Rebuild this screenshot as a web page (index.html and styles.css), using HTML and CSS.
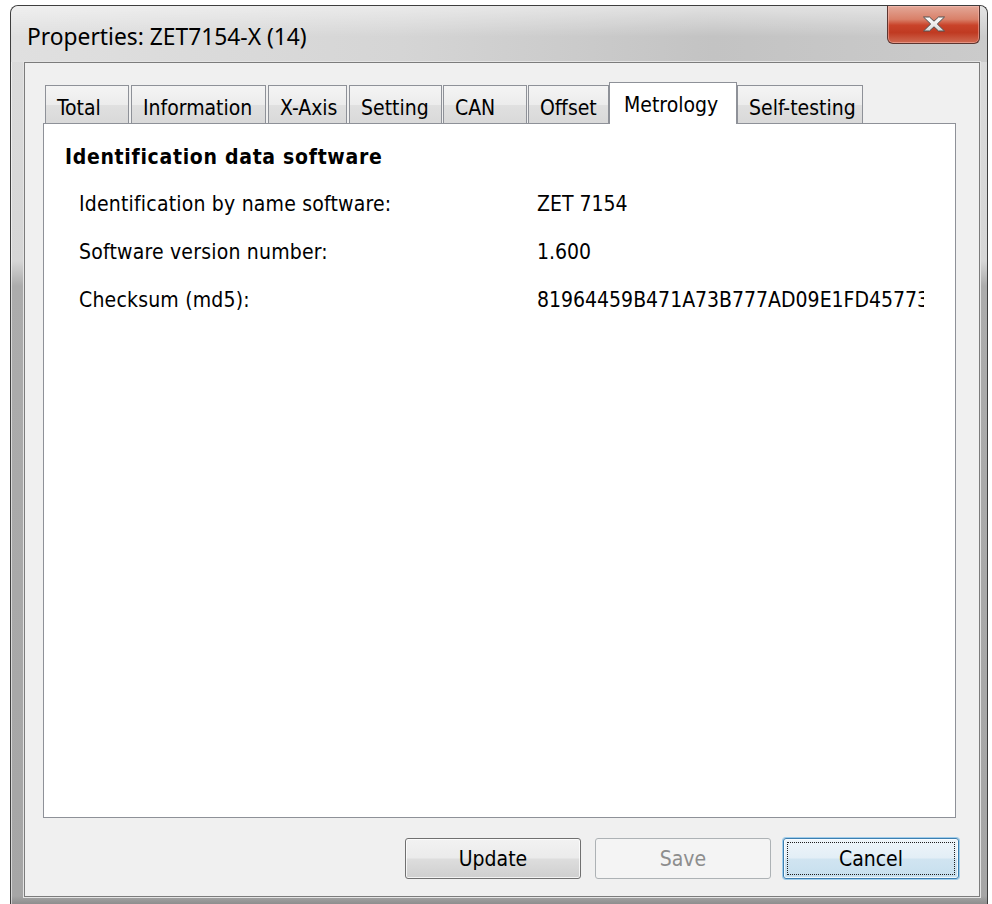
FILE: index.html
```html
<!DOCTYPE html>
<html lang="en">
<head>
<meta charset="utf-8">
<title>Properties: ZET7154-X (14)</title>
<link rel="stylesheet" href="styles.css">
</head>
<body>
<div class="window">
  <div class="titlebar">
    <span class="title">Properties: ZET7154-X (14)</span>
    <button class="close" type="button" aria-label="Close">
      <svg width="24" height="16" viewBox="0 0 24 16" aria-hidden="true">
        <defs>
          <linearGradient id="xfill" x1="0" y1="0" x2="0" y2="1">
            <stop offset="0" stop-color="#ffffff"/>
            <stop offset="1" stop-color="#d9d9d9"/>
          </linearGradient>
        </defs>
        <polygon points="1.5,1 7.5,1 12,5.2 16.5,1 22.5,1 15.3,8 22.5,15 16.5,15 12,10.8 7.5,15 1.5,15 8.7,8"
                 fill="url(#xfill)" stroke="#505050" stroke-width="1" stroke-linejoin="round"/>
      </svg>
    </button>
  </div>

  <div class="client">
    <div class="tabctl">
      <div class="tabs">
        <div class="tab tab-total">Total</div>
        <div class="tab tab-info">Information</div>
        <div class="tab tab-axis">X-Axis</div>
        <div class="tab tab-setting">Setting</div>
        <div class="tab tab-can">CAN</div>
        <div class="tab tab-offset">Offset</div>
        <div class="tab tab-metrology selected">Metrology</div>
        <div class="tab tab-self">Self-testing</div>
      </div>
      <div class="page">
        <div class="group">Identification data software</div>
        <div class="row">
          <span class="label">Identification by name software:</span>
          <span class="value">ZET 7154</span>
        </div>
        <div class="row">
          <span class="label">Software version number:</span>
          <span class="value">1.600</span>
        </div>
        <div class="row">
          <span class="label">Checksum (md5):</span>
          <span class="value">81964459B471A73B777AD09E1FD45773F0</span>
        </div>
      </div>
    </div>

    <div class="buttons">
      <button class="btn" type="button">Update</button>
      <button class="btn btn-disabled" type="button" disabled>Save</button>
      <button class="btn btn-default" type="button"><span class="focus">Cancel</span></button>
    </div>
  </div>
</div>
</body>
</html>
```

FILE: styles.css
```css
html, body {
  margin: 0;
  padding: 0;
  background: #ffffff;
}

body {
  width: 992px;
  height: 904px;
  overflow: hidden;
  font-family: "DejaVu Sans Condensed", "DejaVu Sans", sans-serif;
  font-stretch: condensed;
  font-size: 21px;
  color: #000;
}

/* ---------- window frame ---------- */
.window {
  box-sizing: border-box;
  margin: 5px 0 0 10px;
  width: 978px;
  height: 899px;
  border: 1px solid #3e3e3e;
  border-bottom-width: 0;
  border-radius: 8px 8px 0 0;
  padding: 0 7px 7px 13px;
  display: flex;
  flex-direction: column;
  background:
    linear-gradient(180deg, #dcdcdc 0, #d6d6d6 255px, #acacac 280px, #a6a6a6 890px, #8e8e8e 100%);
  box-shadow: inset 1px 1px 0 rgba(255,255,255,0.55);
  overflow: hidden;
}

.titlebar {
  height: 56px;
  margin: 0 -7px 0 -13px;
  padding: 0 7px 0 17px;
  display: flex;
  align-items: flex-start;
  justify-content: space-between;
  background:
    linear-gradient(180deg, rgba(255,255,255,0.5) 0, rgba(255,255,255,0) 55%),
    linear-gradient(90deg, #e0e0e0 0%, #d5d5d5 40%, #c3c3c3 72%, #cbcbcb 100%);
  border-radius: 7px 7px 0 0;
}

.title {
  font-family: "Noto Sans", "Open Sans", sans-serif;
  font-stretch: normal;
  font-size: 22.8px;
  line-height: 30px;
  margin-top: 16px;
  margin-left: -1px;
  color: #000;
}

.close {
  width: 93px;
  height: 38px;
  margin: 0;
  padding: 0;
  border: 1px solid #5b3530;
  border-top: 0;
  border-radius: 0 0 6px 6px;
  display: flex;
  align-items: center;
  justify-content: center;
  background:
    linear-gradient(180deg, #e3a898 0%, #d98069 36%, #c9432a 52%, #c03a22 72%, #cf6a52 100%);
  box-shadow: inset 0 0 0 1px rgba(255,200,190,0.45);
}

.close svg {
  display: block;
  margin-top: -2px;
}

/* ---------- client area ---------- */
.client {
  flex: 1;
  border: 1px solid #7c7c7c;
  box-shadow: 0 0 0 1px #e4e4e4;
  background: #f0f0f0;
  padding: 19px 20px 0 18px;
  display: flex;
  flex-direction: column;
}

.tabctl {
  height: 736px;
  margin-right: 3px;
  display: flex;
  flex-direction: column;
}

.tabs {
  height: 41px;
  padding-left: 2px;
  display: flex;
  align-items: flex-end;
}

.tab {
  box-sizing: border-box;
  height: 38px;
  border: 1px solid #8e9198;
  border-bottom: 0;
  margin-right: 2px;
  padding: 10px 0 0 11px;
  line-height: 24px;
  white-space: nowrap;
  background: linear-gradient(180deg, #f4f4f4 0%, #ececec 50%, #e0e0e0 51%, #d9d9d9 100%);
}

.tab-total   { width: 84px; }
.tab-info    { width: 135px; }
.tab-axis    { width: 79px; }
.tab-setting { width: 93px; margin-right: 1px; }
.tab-can     { width: 84px; margin-right: 1px; }
.tab-offset  { width: 81px; margin-right: 0; }
.tab-self    { width: 126px; }

.tab.selected {
  width: 128px;
  height: 42px;
  margin-right: 0;
  margin-bottom: -1px;
  padding-left: 14px;
  background: #ffffff;
  position: relative;
  z-index: 1;
}

.page {
  flex: 1;
  background: #ffffff;
  border: 1px solid #8e9198;
  padding: 21px 0 0 21px;
}

.group {
  font-weight: bold;
  line-height: 24px;
  letter-spacing: 0.7px;
}

.row {
  display: flex;
  height: 48px;
  align-items: center;
  padding-left: 14px;
}

.group + .row { margin-top: 11px; }

.label {
  width: 458px;
  flex: none;
  letter-spacing: 0.2px;
}

.value {
  width: 387px;
  overflow: hidden;
  white-space: nowrap;
}

/* ---------- dialog buttons ---------- */
.buttons {
  margin-top: 20px;
  display: flex;
  justify-content: flex-end;
  gap: 14px;
}

.btn {
  box-sizing: border-box;
  width: 176px;
  height: 41px;
  margin: 0;
  padding: 0;
  font: inherit;
  color: #000;
  border: 1px solid #707070;
  border-radius: 3px;
  background: linear-gradient(180deg, #f2f2f2 0%, #ebebeb 48%, #dddddd 52%, #cfcfcf 100%);
  box-shadow: inset 0 0 0 1px rgba(255,255,255,0.75);
}

.btn-disabled {
  color: #8d8d8d;
  border-color: #adb2b5;
  background: #f4f4f4;
  box-shadow: none;
}

.btn-default {
  margin-left: -2px;
  padding: 3px;
  border-color: #3c7fb1;
  background: linear-gradient(180deg, #eef5fa 0%, #e3eef6 48%, #d0e4f1 52%, #c6dfee 100%);
  box-shadow: 0 0 0 1px rgba(80,170,230,0.5), inset 0 0 0 1px rgba(255,255,255,0.7);
}

.btn-default .focus {
  box-sizing: border-box;
  display: flex;
  align-items: center;
  justify-content: center;
  height: 100%;
  border: 1px dotted #1d1d1d;
}
```
